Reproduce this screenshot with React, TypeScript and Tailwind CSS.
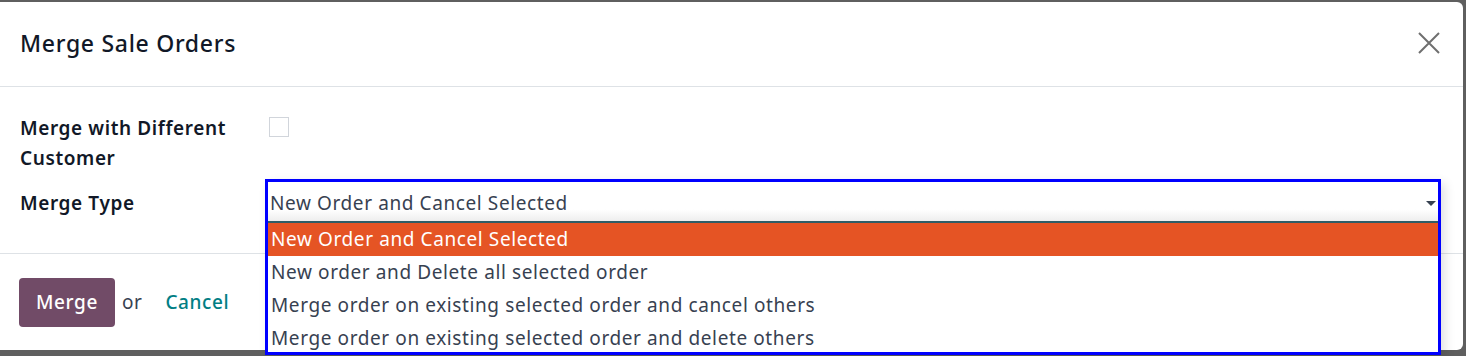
const options = [
  "New Order and Cancel Selected",
  "New order and Delete all selected order",
  "Merge order on existing selected order and cancel others",
  "Merge order on existing selected order and delete others",
];

export default function App() {
  return (
    <div
      className="relative h-[356px] w-[1466px] overflow-hidden bg-[#5f5f5f] pt-[2px] pr-[3px] pb-[6px]"
      style={{ fontFamily: '"Noto Sans", "Open Sans", sans-serif' }}
    >
      <div className="flex h-full flex-col rounded-r-[6px] bg-white">
        {/* Header */}
        <div className="flex h-[85px] shrink-0 items-center justify-between border-b border-[#dee2e6] pl-[20px] pr-[23px]">
          <h4 className="-mt-[2px] text-[23px] font-medium tracking-[0.7px] text-[#111827]">Merge Sale Orders</h4>
          <svg width="22" height="22" viewBox="0 0 22 22" className="-mt-[2px] text-[#6f6f6f]">
            <path d="M1 1L21 21M21 1L1 21" stroke="currentColor" strokeWidth="2" fill="none" />
          </svg>
        </div>

        {/* Body */}
        <div className="flex h-[167px] shrink-0 flex-col gap-[15px] border-b border-[#dee2e6] px-[20px] pt-[26px]">
          <div className="flex">
            <label className="w-[249px] text-[19px] font-semibold leading-[30px] tracking-[0.6px] text-[#111827]">
              Merge with Different
              <br />
              Customer
            </label>
            <div className="mt-[4px] h-[20px] w-[20px] border border-[#d1d5db] bg-white" />
          </div>
          <div className="flex">
            <label className="w-[249px] text-[19px] font-semibold leading-[30px] tracking-[0.6px] text-[#111827]">
              Merge Type
            </label>
          </div>
        </div>

        {/* Footer */}
        <div className="flex items-center gap-[7px] px-[19px] pt-[24px] text-[19px] tracking-[0.6px]">
          <button className="h-[49px] rounded-[4px] bg-[#714b67] px-[17px] font-medium text-white">Merge</button>
          <span className="text-[#374151]">or</span>
          <span className="ml-[16px] font-medium text-[#017e84]">Cancel</span>
        </div>
      </div>

      {/* Open select with its native list */}
      <div className="absolute left-[265px] top-[179px] h-[176px] w-[1176px] border-[3px] border-[#0000ff] bg-white text-[19px] tracking-[0.6px] shadow-[4px_4px_10px_rgba(0,0,0,0.12)]">
        <div className="flex h-[39px] items-center justify-between bg-gradient-to-b from-white from-70% to-[#eeeeee] pl-[2px] pr-[2px]">
          <span className="mt-[3px] text-[#374151]">{options[0]}</span>
          <span className="mt-[3px] h-0 w-0 border-x-[5px] border-t-[5px] border-x-transparent border-t-[#374151]" />
        </div>
        <div className="h-[2px] bg-[#2f5d66]" />
        <ul>
          {options.map((o, i) => (
            <li
              key={o}
              className={`flex h-[33px] items-center pl-[3px] ${i === 0 ? "bg-[#e55424] text-white" : "text-[#374151]"}`}
            >
              {o}
            </li>
          ))}
        </ul>
      </div>
    </div>
  );
}
